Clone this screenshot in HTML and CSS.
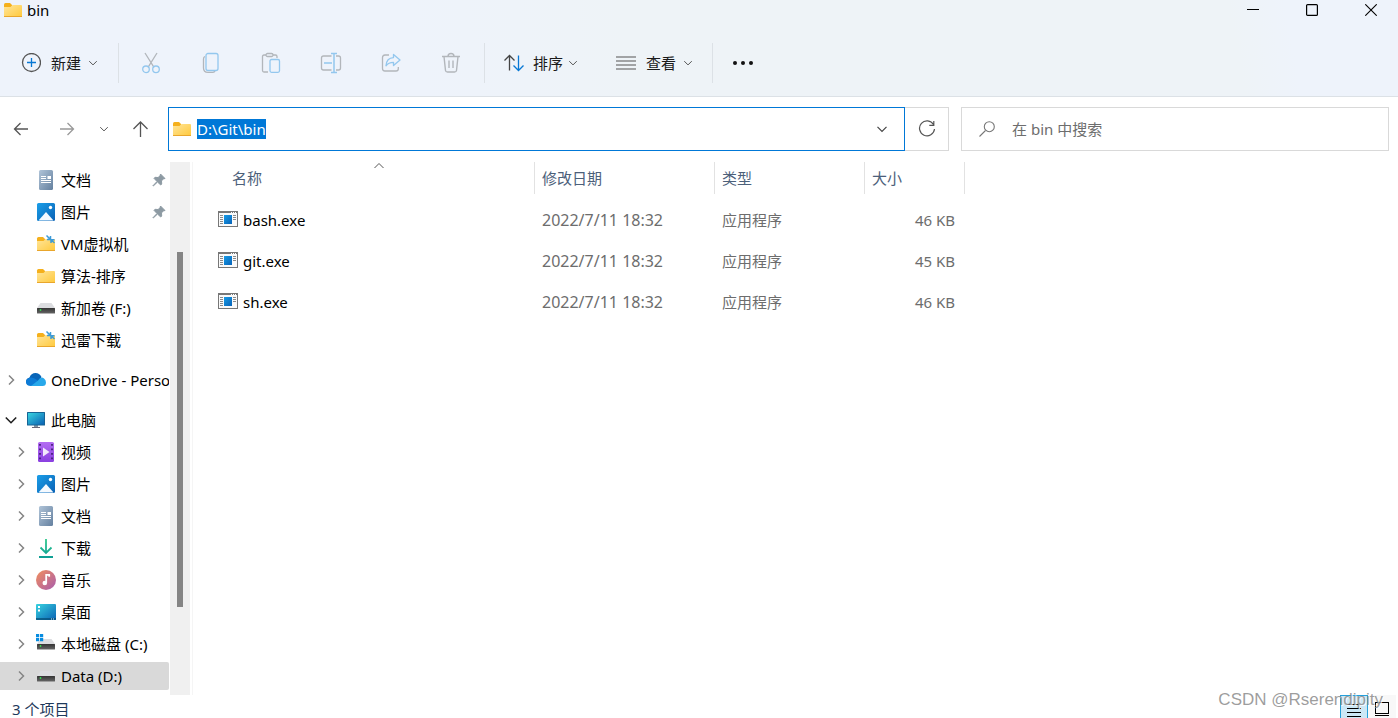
FILE: index.html
```html
<!DOCTYPE html>
<html lang="zh-CN">
<head>
<meta charset="utf-8">
<title>bin</title>
<link rel="stylesheet" href="styles.css">
</head>
<body>
<svg class="sprite" aria-hidden="true">
  <defs>
    <linearGradient id="g-folder" x1="0" y1="0" x2="1" y2="1"><stop offset="0" stop-color="#ffe59a"/><stop offset="1" stop-color="#ffc93c"/></linearGradient>
    <linearGradient id="g-pic" x1="0" y1="0" x2="1" y2="1"><stop offset="0" stop-color="#1a9ee8"/><stop offset="1" stop-color="#0b62b5"/></linearGradient>
    <linearGradient id="g-doc" x1="0" y1="0" x2="1" y2="1"><stop offset="0" stop-color="#b0c4d8"/><stop offset="1" stop-color="#64809f"/></linearGradient>
    <linearGradient id="g-screen" x1="0" y1="0" x2="1" y2="1"><stop offset="0" stop-color="#38d3e0"/><stop offset="1" stop-color="#0a62b4"/></linearGradient>
    <linearGradient id="g-video" x1="0" y1="0" x2="0" y2="1"><stop offset="0" stop-color="#b36cf2"/><stop offset="1" stop-color="#8a3fe0"/></linearGradient>
    <linearGradient id="g-down" x1="0" y1="0" x2="0" y2="1"><stop offset="0" stop-color="#2fc98c"/><stop offset="1" stop-color="#0f9f95"/></linearGradient>
    <linearGradient id="g-music" x1="0" y1="0" x2="1" y2="1"><stop offset="0" stop-color="#f28f5c"/><stop offset="1" stop-color="#a85cae"/></linearGradient>
    <linearGradient id="g-disk" x1="0" y1="0" x2="0" y2="1"><stop offset="0" stop-color="#333"/><stop offset="1" stop-color="#666"/></linearGradient>
    <linearGradient id="g-exe" x1="0" y1="0" x2="1" y2="1"><stop offset="0" stop-color="#179be6"/><stop offset="1" stop-color="#0763b9"/></linearGradient>
  </defs>
  <symbol id="folder" viewBox="0 0 20 20"><path d="M1 4.500Q1 3 2.500 3H7l2 2v4H1z" fill="#f5b01c"/><path d="M1 7h6.500l2-2H18q1 0 1 1v10q0 1-1 1H2q-1 0-1-1z" fill="url(#g-folder)"/><path d="M1 16.500h18" stroke="#e9a62c"/></symbol>
  <symbol id="folder-link" viewBox="0 0 20 20"><use href="#folder"/><path d="M10.500 1.500l3.500 3.500M14.500 2v3.500H11M18.500 9L15 5.800M15 9V5.800h3.500" fill="none" stroke="#3d9bd8" stroke-width="1.500"/></symbol>
  <symbol id="doc" viewBox="0 0 20 20"><rect x="3" width="14" height="20" rx="1.500" fill="url(#g-doc)"/><path d="M5 6.500h5M5 8.500h5M5 10.500h10M5 12.500h10" stroke="#fff"/><rect x="11.500" y="6" width="3.500" height="3" fill="#fff"/></symbol>
  <symbol id="picture" viewBox="0 0 20 20"><rect x="1" y="1" width="18" height="18" rx="1.500" fill="url(#g-pic)"/><path d="M2.500 18.500L10 10l7.500 8.500z" fill="#f5faff"/><circle cx="14.500" cy="5.500" r="1.700" fill="#fff"/></symbol>
  <symbol id="disk" viewBox="0 0 20 20"><path d="M4.500 5h11L19 10H1z" fill="#dcdde0"/><rect x="1" y="10" width="18" height="5.500" rx=".5" fill="url(#g-disk)"/><circle cx="4.500" cy="12" r=".9" fill="#33e052"/></symbol>
  <symbol id="disk-win" viewBox="0 0 20 20"><use href="#disk"/><path d="M0 0h3.200v3.200H0zM4 0h3.200v3.200H4zM0 4h3.200v3.200H0zM4 4h3.200v3.200H4z" fill="#078ce0"/></symbol>
  <symbol id="cloud" viewBox="0 0 20 20"><path d="M5 15Q0 15 0 11.500q0-3 3.500-4Q5 3 9.500 3q4 0 6 4l-4 6z" fill="#0965b8"/><path d="M5 16q-5 0-5-4 0-4 5-4.500 3 0 6 2.500l4 5z" fill="#0d7bd6"/><path d="M5 16l7-5.500Q15 6 18 8.500q2 1.500 2 4 0 3.500-3.500 3.500z" fill="#28a8ea"/></symbol>
  <symbol id="pc" viewBox="0 0 20 20"><path d="M8 15h4v3H8z" fill="#8494a2"/><path d="M6 17.500h8" stroke="#667"/><rect x="1" y="2" width="18" height="13.500" rx=".5" fill="#166495"/><rect x="2" y="3" width="16" height="11.500" fill="url(#g-screen)"/></symbol>
  <symbol id="video" viewBox="0 0 20 20"><rect x="2" width="16" height="20" rx="1.500" fill="url(#g-video)"/><path d="M4 2v17M16 2v17" stroke="#452078" stroke-width="1.800" stroke-dasharray="1.800 2.700"/><path d="M7 5.500v9l6.500-4.500z" fill="#f3eafc"/></symbol>
  <symbol id="download" viewBox="0 0 20 20"><path d="M10 1v14M4.500 9.500L10 15l5.500-5.500M3 19h14" fill="none" stroke="url(#g-down)" stroke-width="1.800"/></symbol>
  <symbol id="music" viewBox="0 0 20 20"><circle cx="10" cy="10" r="10" fill="url(#g-music)"/><circle cx="8.800" cy="13" r="2.300" fill="#fff"/><path d="M10.200 13V4.800h3v2" fill="none" stroke="#fff" stroke-width="1.800"/></symbol>
  <symbol id="desktop" viewBox="0 0 20 20"><rect y="2" width="20" height="16" rx="1" fill="url(#g-screen)"/><path d="M0 17h20" stroke="#075078" stroke-width="1.500"/><path d="M2 4h2v2H2zM2 7.500h2v2H2z" fill="#fff"/><path d="M15 17h3" stroke="#d5eefd" stroke-dasharray="1 1"/></symbol>
  <symbol id="pin" viewBox="0 0 14 14"><path d="M8.500 1L13 5.500 11 6l-1.500 2 .2 3-1 1L5.500 9 1.300 13 1 12.700 5 8.500 2 5.300l1-1L6 4.500 8 3z" fill="#8d9aa3" stroke="#8d9aa3" stroke-linejoin="round"/></symbol>
  <symbol id="chev-right" viewBox="0 0 12 12"><path d="M4 1.500L8.500 6 4 10.500" fill="none" stroke="#858585" stroke-width="1.500"/></symbol>
  <symbol id="chev-down" viewBox="0 0 12 12"><path d="M1.500 3.800L6 8.300l4.500-4.500" fill="none" stroke="currentColor" stroke-width="1.200"/></symbol>
  <symbol id="chev-open" viewBox="0 0 12 12"><path d="M.8 3.500L6 8.700l5.200-5.200" fill="none" stroke="#222" stroke-width="1.600"/></symbol>
  <symbol id="exe" viewBox="0 0 20 16"><rect x=".5" y=".5" width="19" height="15" fill="#fafafa" stroke="#777"/><path d="M0 1h20" stroke="#777" stroke-width="2"/><path d="M13 1.500h1M15 1.500h1M17 1.500h1" stroke="#fff"/><path d="M2 4.500h3M2 6.500h3M2 8.500h3M2 10.500h3M2 12.500h3M15 4.500h3M15 6.500h3M15 8.500h3" stroke="#8a8a8a"/><rect x="6" y="4" width="8" height="9" fill="url(#g-exe)"/></symbol>
</svg>

<div class="window">
  <header class="top">
    <div class="titlebar">
      <svg class="icon"><use href="#folder"/></svg>
      <h1 class="title">bin</h1>
      <div class="controls">
        <button class="control" aria-label="最小化"><svg width="12" height="12"><path d="M0 5.500h12" stroke="#000"/></svg></button>
        <button class="control" aria-label="最大化"><svg width="12" height="12"><rect x=".6" y=".6" width="10.800" height="10.800" rx="1" fill="none" stroke="#000" stroke-width="1.200"/></svg></button>
        <button class="control" aria-label="关闭"><svg width="12" height="12"><path d="M.3.300l11.400 11.400M11.700.300L.3 11.700" stroke="#000" stroke-width="1.100"/></svg></button>
      </div>
    </div>
    <div class="toolbar">
      <button class="tool tool-new"><svg width="20" height="20" fill="none"><circle cx="10.500" cy="9.500" r="9" stroke="#555" stroke-width="1.300"/><path d="M10.500 5v9M6 9.500h9" stroke="#0878d4" stroke-width="1.300"/></svg><span>新建</span><svg class="caret"><use href="#chev-down"/></svg></button>
      <span class="divider"></span>
      <div class="actions">
        <button class="action" aria-label="剪切" disabled><svg width="20" height="22" fill="none" stroke-width="1.300"><path d="M4 1l9 14.300M16 1L7 15.300" stroke="#b2b6bb"/><circle cx="5" cy="17.300" r="3.300" stroke="#93c7ee"/><circle cx="15" cy="17.300" r="3.300" stroke="#93c7ee"/></svg></button>
        <button class="action" aria-label="复制" disabled><svg width="20" height="22" fill="none" stroke-width="1.300"><path d="M4 4.500Q2.500 5 2.500 7v9q0 4.300 4.500 4.300h5q1.500 0 2-1.500" stroke="#b2b6bb"/><rect x="5" y="1.500" width="12" height="17" rx="2" stroke="#93c7ee"/></svg></button>
        <button class="action" aria-label="粘贴" disabled><svg width="20" height="22" fill="none" stroke-width="1.300"><path d="M5 3H3Q1.500 3 1.500 4.500v14Q1.500 20 3 20h4M12 3h2.500Q16 3 16 4.500V6" stroke="#b2b6bb"/><rect x="5" y="1.500" width="7" height="3" rx="1.500" stroke="#b2b6bb"/><rect x="9" y="7.500" width="9.500" height="12.800" rx="1.500" stroke="#93c7ee"/></svg></button>
        <button class="action" aria-label="重命名" disabled><svg width="22" height="22" fill="none" stroke-width="1.300"><path d="M11.500 4H3.500Q1.500 4 1.500 6v10q0 2 2 2h8M16 4h2.500q2 0 2 2v10q0 2-2 2H16" stroke="#b2b6bb"/><path d="M11 1.500h6M14 1.500v19M11 20.500h6M4 11h8" stroke="#93c7ee" stroke-width="1.500"/></svg></button>
        <button class="action" aria-label="共享" disabled><svg width="20" height="22" fill="none" stroke-width="1.300" stroke-linejoin="round"><path d="M8 3H4Q1.500 3 1.500 5.500v11Q1.500 19 4 19h11q2.300 0 2.300-2.300V15" stroke="#b2b6bb"/><path d="M12.500 2.500l6.500 5.500-6.500 5.500v-3.200q-5 0-7.500 3.500.5-8 7.500-8.200z" stroke="#93c7ee"/></svg></button>
        <button class="action" aria-label="删除" disabled><svg width="20" height="22" fill="none" stroke="#b2b6bb" stroke-width="1.400"><path d="M1 4.500h18M7 4.500q0-3 3-3t3 3M3 4.500l1.500 14Q4.700 20 6.500 20h7q1.800 0 2-1.500L17 4.500M8 8.500V16M12 8.500V16"/></svg></button>
      </div>
      <span class="divider"></span>
      <button class="tool tool-sort"><svg width="22" height="20" fill="none" stroke-width="1.300"><path d="M6.500 17.500V2.500M1.500 7.500l5-5 5 5" stroke="#444"/><path d="M15.500 2.500v15M10.500 12.500l5 5 5-5" stroke="#0878d4"/></svg><span>排序</span><svg class="caret"><use href="#chev-down"/></svg></button>
      <button class="tool tool-view"><svg width="20" height="20"><path d="M0 4h20M0 8h20M0 12h20M0 16h20" stroke="#555" stroke-width="1.200"/></svg><span>查看</span><svg class="caret"><use href="#chev-down"/></svg></button>
      <span class="divider"></span>
      <button class="tool tool-more" aria-label="更多"><svg width="22" height="20" fill="#111"><circle cx="3" cy="10" r="2"/><circle cx="11" cy="10" r="2"/><circle cx="19" cy="10" r="2"/></svg></button>
    </div>
  </header>

  <div class="location">
    <nav class="nav" aria-label="导航">
      <button class="nav-button" aria-label="后退"><svg width="16" height="16" fill="none" stroke="#555" stroke-width="1.300"><path d="M15 8H1.500M7.500 2l-6 6 6 6"/></svg></button>
      <button class="nav-button" aria-label="前进"><svg width="16" height="16" fill="none" stroke="#999" stroke-width="1.300"><path d="M1 8h13.500M8.500 2l6 6-6 6"/></svg></button>
      <button class="nav-button recent" aria-label="最近位置"><svg class="caret"><use href="#chev-down"/></svg></button>
      <button class="nav-button" aria-label="上移"><svg width="18" height="18" fill="none" stroke="#555" stroke-width="1.300"><path d="M9.500 17V2M2.500 9l7-7 7 7"/></svg></button>
    </nav>
    <div class="address">
      <div class="address-box">
        <svg class="icon"><use href="#folder"/></svg>
        <input class="address-input" id="address" type="text" aria-label="地址" value="D:\Git\bin" spellcheck="false">
        <button class="address-drop" aria-label="历史记录"><svg width="12" height="12"><use href="#chev-down"/></svg></button>
      </div>
      <button class="refresh" aria-label="刷新"><svg width="18" height="18" fill="none" stroke="#555" stroke-width="1.200"><path d="M15.500 4.500A7.500 7.500 0 1 0 16.500 9M15.800 1v4.300h-4.500"/></svg></button>
    </div>
    <label class="search">
      <svg width="18" height="18" fill="none" stroke="#777" stroke-width="1.100"><circle cx="11.300" cy="6.700" r="5"/><path d="M7.500 10.500L1.500 16.500"/></svg>
      <input class="search-input" type="text" aria-label="搜索" placeholder="在 bin 中搜索">
    </label>
  </div>

  <div class="body">
    <aside class="sidebar">
      <div class="tree">
        <a class="node quick" href="#"><svg class="icon"><use href="#doc"/></svg><span>文档</span><svg class="pin"><use href="#pin"/></svg></a>
        <a class="node quick" href="#"><svg class="icon"><use href="#picture"/></svg><span>图片</span><svg class="pin"><use href="#pin"/></svg></a>
        <a class="node quick" href="#"><svg class="icon"><use href="#folder-link"/></svg><span>VM虚拟机</span></a>
        <a class="node quick" href="#"><svg class="icon"><use href="#folder"/></svg><span>算法-排序</span></a>
        <a class="node quick" href="#"><svg class="icon"><use href="#disk"/></svg><span>新加卷 (F:)</span></a>
        <a class="node quick" href="#"><svg class="icon"><use href="#folder-link"/></svg><span>迅雷下载</span></a>
        <a class="node root" href="#"><svg class="twisty"><use href="#chev-right"/></svg><svg class="icon"><use href="#cloud"/></svg><span>OneDrive - Personal</span></a>
        <a class="node root" href="#"><svg class="twisty"><use href="#chev-open"/></svg><svg class="icon"><use href="#pc"/></svg><span>此电脑</span></a>
        <a class="node" href="#"><svg class="twisty"><use href="#chev-right"/></svg><svg class="icon"><use href="#video"/></svg><span>视频</span></a>
        <a class="node" href="#"><svg class="twisty"><use href="#chev-right"/></svg><svg class="icon"><use href="#picture"/></svg><span>图片</span></a>
        <a class="node" href="#"><svg class="twisty"><use href="#chev-right"/></svg><svg class="icon"><use href="#doc"/></svg><span>文档</span></a>
        <a class="node" href="#"><svg class="twisty"><use href="#chev-right"/></svg><svg class="icon"><use href="#download"/></svg><span>下载</span></a>
        <a class="node" href="#"><svg class="twisty"><use href="#chev-right"/></svg><svg class="icon"><use href="#music"/></svg><span>音乐</span></a>
        <a class="node" href="#"><svg class="twisty"><use href="#chev-right"/></svg><svg class="icon"><use href="#desktop"/></svg><span>桌面</span></a>
        <a class="node" href="#"><svg class="twisty"><use href="#chev-right"/></svg><svg class="icon"><use href="#disk-win"/></svg><span>本地磁盘 (C:)</span></a>
        <a class="node selected" href="#"><svg class="twisty"><use href="#chev-right"/></svg><svg class="icon"><use href="#disk"/></svg><span>Data (D:)</span></a>
      </div>
      <div class="scrollbar"><div class="thumb"></div></div>
    </aside>
    <main class="files">
      <table class="table">
        <colgroup><col class="col-name"><col class="col-date"><col class="col-type"><col class="col-size"></colgroup>
        <thead>
          <tr>
            <th><div class="head head-name">名称<svg class="sorted" width="12" height="8"><path d="M1.500 6L6 1.500 10.500 6" fill="none" stroke="#555"/></svg></div></th>
            <th><div class="head">修改日期</div></th>
            <th><div class="head">类型</div></th>
            <th><div class="head">大小</div></th>
          </tr>
        </thead>
        <tbody>
          <tr><td><div class="file"><svg class="exe"><use href="#exe"/></svg><span>bash.exe</span></div></td><td class="date">2022/7/11 18:32</td><td>应用程序</td><td class="size">46 KB</td></tr>
          <tr><td><div class="file"><svg class="exe"><use href="#exe"/></svg><span>git.exe</span></div></td><td class="date">2022/7/11 18:32</td><td>应用程序</td><td class="size">45 KB</td></tr>
          <tr><td><div class="file"><svg class="exe"><use href="#exe"/></svg><span>sh.exe</span></div></td><td class="date">2022/7/11 18:32</td><td>应用程序</td><td class="size">46 KB</td></tr>
        </tbody>
      </table>
    </main>
  </div>

  <footer class="status">
    <span class="count">3 个项目</span>
    <div class="views">
      <button class="view active" aria-label="详细信息"><svg width="16" height="18"><path d="M1 4.500h14M1 8.500h14M1 12.500h14M1 16.500h14" stroke="#000"/></svg></button>
      <button class="view" aria-label="大图标"><svg width="16" height="18" fill="none" stroke="#000"><rect x="1.500" y="3.500" width="13" height="11"/><path d="M1 16.500h14"/></svg></button>
    </div>
  </footer>
  <div class="watermark">CSDN @Rserendipity</div>
</div>
<script src="app.js"></script>
</body>
</html>
```

FILE: styles.css
```css
* { box-sizing: border-box; }
body {
  margin: 0;
  background: #fff;
  color: #000;
  font: 15px/20px "Noto Sans", "Noto Sans CJK SC", sans-serif;
}
button, input { font: inherit; color: inherit; border: 0; background: none; padding: 0; }
button { display: flex; align-items: center; justify-content: center; }
svg { display: block; flex: none; }
.sprite { position: absolute; width: 0; height: 0; }
.icon { width: 20px; height: 20px; }

.window {
  position: relative;
  display: flex;
  flex-direction: column;
  height: 100vh;
  overflow: hidden;
}

.top {
  flex: none;
  border-bottom: 1px solid #dce1e6;
  background: linear-gradient(80deg, #eef3fb 0 30%, #eef3f7 45% 88%, #eef3fb 92%);
}
.titlebar { display: flex; align-items: center; height: 20px; padding-left: 3px; }
.title { margin: 0 0 0 4px; font-size: 15px; font-weight: 400; }
.controls { display: flex; gap: 5px; margin-left: auto; }
.control { width: 54px; height: 20px; }

.toolbar { display: flex; align-items: center; height: 66px; margin-top: 10px; color: #1a1a1a; }
.tool { height: 40px; }
.caret { width: 10px; height: 10px; color: #555; }
.tool-new { gap: 10px; padding: 0 20px 0 21px; }
.tool .caret { margin-left: -3px; }
.tool-sort { gap: 8px; padding-left: 18px; }
.tool-view { gap: 10px; padding: 0 19px 0 38px; }
.tool-more { padding-left: 19px; }
.divider { width: 1px; height: 40px; background: #dce1e6; }
.actions { display: flex; padding: 0 3px 0 2px; }
.action { width: 60px; height: 40px; }

.location {
  display: grid;
  flex: none;
  grid-template-columns: 156px 781fr 428fr;
  gap: 12px;
  padding: 10px 9px 11px 0;
}
.nav { display: flex; align-items: center; padding-left: 8px; }
.nav-button { width: 26px; height: 32px; }
.nav-button + .nav-button { margin-left: 20px; }
.nav-button.recent { width: 20px; margin-left: 14px; }
.nav-button.recent + .nav-button { margin-left: 13px; }
.address { display: flex; min-width: 0; height: 44px; }
.address-box {
  display: flex;
  flex: 1;
  align-items: center;
  min-width: 0;
  padding-left: 3px;
  border: 1px solid #0078d7;
}
.address-input { flex: 1; min-width: 0; height: 24px; margin-left: 5px; outline: 0; }
.address-input::selection { background: #0078d7; color: #fff; }
.address-drop { width: 44px; height: 42px; color: #444; }
.refresh { width: 44px; border: 1px solid #d9d9d9; border-left: 0; }
.search {
  display: flex;
  align-items: center;
  gap: 16px;
  min-width: 0;
  height: 44px;
  padding-left: 16px;
  border: 1px solid #d9d9d9;
}
.search-input { flex: 1; min-width: 0; outline: 0; }
.search-input::placeholder { color: #6d6d6d; opacity: 1; }

.body { display: flex; flex: 1; min-height: 0; }
.sidebar { display: flex; width: 193px; border-right: 1px solid #f5f5f5; }
.tree {
  display: flex;
  flex: none;
  flex-direction: column;
  gap: 4px;
  width: 170px;
  padding: 4px 1px 0 0;
  overflow: hidden;
}
.node {
  display: flex;
  flex: none;
  align-items: center;
  gap: 5px;
  height: 28px;
  padding-left: 15px;
  border-radius: 0 2px 2px 0;
  color: #000;
  text-decoration: none;
  white-space: nowrap;
  overflow: hidden;
}
.node.quick { padding-left: 36px; }
.node.root { margin-top: 8px; padding-left: 5px; }
.node.selected { background: #d9d9d9; }
.node .icon { margin-left: 4px; }
.node.quick .icon { margin-left: 0; }
.twisty { width: 12px; height: 12px; }
.pin { width: 14px; height: 14px; margin: 0 3px 0 auto; }
.scrollbar { width: 20px; padding: 90px 7px 88px; background: #f0f0f0; }
.thumb { height: 100%; background: #858585; }

.files { flex: 1; min-width: 0; }
.table { width: 772px; table-layout: fixed; border-collapse: collapse; text-align: left; }
.col-name { width: 342px; }
.col-date { width: 180px; }
.col-type { width: 150px; }
.table th { height: 37px; padding: 0; font-weight: 400; vertical-align: top; }
.head {
  position: relative;
  height: 32px;
  padding-left: 7px;
  border-right: 1px solid #e2e2e2;
  color: #4c607a;
  line-height: 32px;
}
.head-name { padding-left: 39px; }
.sorted { position: absolute; top: 0; left: 180px; }
.table td { height: 41px; padding: 0 0 0 7px; color: #6d6d6d; }
.table td:first-child { padding-left: 25px; }
.file { display: flex; align-items: center; gap: 5px; color: #000; }
.exe { width: 20px; height: 16px; margin-bottom: 2px; }
.table .date { font-size: 16px; }
.table .size { padding: 0 10px 0 0; text-align: right; }

.status { display: flex; flex: none; justify-content: space-between; height: 23px; overflow: hidden; color: #1e395b; }
.count { padding: 4px 12px; line-height: 20px; }
.views { display: flex; padding-right: 2px; }
.view { align-items: flex-start; width: 28px; height: 28px; padding-top: 4px; background: #f8f8f8; }
.view.active { border: 1px solid #26a0da; background: #cce8f6; }
.watermark {
  position: absolute;
  right: 15px;
  bottom: 8px;
  color: rgba(140, 140, 140, .85);
  font: 17px/20px "Liberation Sans", sans-serif;
  text-shadow: 1px 1px 0 rgba(255, 255, 255, .8);
  pointer-events: none;
}
```

FILE: app.js
```js
const address = document.getElementById('address');
address.focus();
address.select();
```
